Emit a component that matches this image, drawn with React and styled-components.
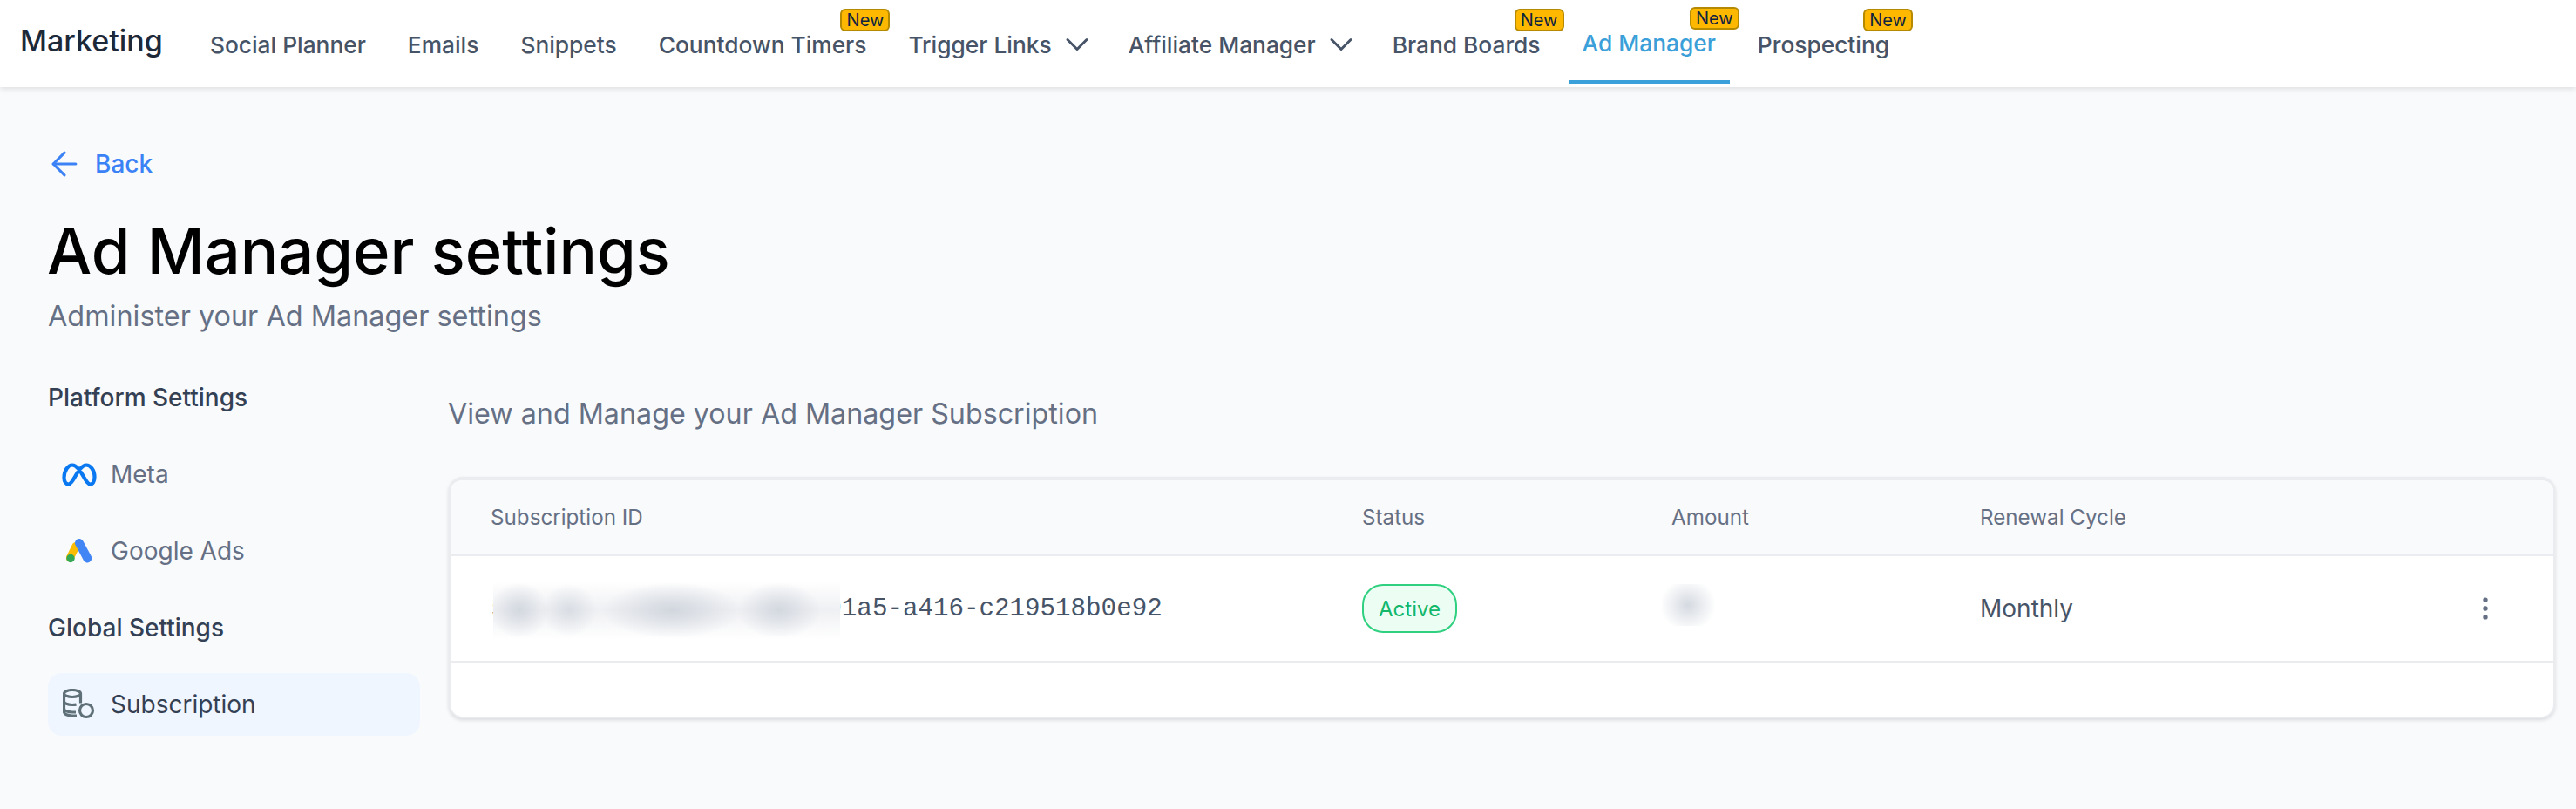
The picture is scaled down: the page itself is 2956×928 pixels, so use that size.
import React from 'react'
import styled, { createGlobalStyle } from 'styled-components'
import { ArrowLeft, ChevronDown, MoreVertical } from 'lucide-react'

const GlobalStyle = createGlobalStyle`
    html, body {
        margin: 0;
        padding: 0;
        background: #f9fafb;
        font-family: Inter, "Noto Sans", sans-serif;
    }
    * { box-sizing: border-box; }
`

const navItems = [
    { label: 'Social Planner' },
    { label: 'Emails' },
    { label: 'Snippets' },
    { label: 'Countdown Timers', badge: true },
    { label: 'Trigger Links', caret: true },
    { label: 'Affiliate Manager', caret: true },
    { label: 'Brand Boards', badge: true },
    { label: 'Ad Manager', badge: true, active: true },
    { label: 'Prospecting', badge: true },
]

const MetaIcon = () => (
    <svg width="40" height="27" viewBox="0 0 40 27" fill="none">
        <path
            d="M2.500 17C2.500 9 7 2.500 12 2.500c5 0 9 6.500 13 13.500 3 5 5 8.500 7.500 8.500 3 0 5-3.500 5-8.500 0-7.500-4.500-13.500-9.500-13.500-5 0-9 6.500-13 13.500-3 5-5 8.500-7.500 8.500C4.500 24.500 2.500 21.500 2.500 17z"
            stroke="#0a78f0"
            strokeWidth="4.200"
            strokeLinejoin="round"
        />
    </svg>
)

const GoogleAdsIcon = () => (
    <svg width="30" height="28" viewBox="0 0 30 28">
        <path d="M11 8.400 L4.300 22" stroke="#fbbc04" strokeWidth="9" strokeLinecap="round" />
        <path d="M15 5 L24.300 22.400" stroke="#4285f4" strokeWidth="10" strokeLinecap="round" />
        <circle cx="5" cy="22.500" r="4.700" fill="#34a853" />
    </svg>
)

const SubscriptionIcon = () => (
    <svg width="38" height="36" viewBox="0 0 38 36" fill="none" stroke="#5f7078" strokeWidth="3.2">
        <ellipse cx="11" cy="5.500" rx="9.500" ry="4" />
        <path d="M1.500 5.500v21c0 2.500 4 4.500 9.500 4.500h5" />
        <path d="M20.500 5.500v11" />
        <path d="M1.500 14.500c0 2.200 4 4 9.500 4 1.500 0 3-.1 4.500-.4" />
        <path d="M1.500 23c0 2.200 4 4 9.500 4h4" />
        <circle cx="27" cy="25" r="7.500" />
    </svg>
)

const App = () => {
    return (
        <Page>
            <GlobalStyle />
            <Header>
                <Brand>Marketing</Brand>
                <Nav>
                    {navItems.map((item) => (
                        <NavItem key={item.label} $active={item.active}>
                            {item.label}
                            {item.caret && <Caret size={44} strokeWidth={1.6} />}
                            {item.badge && <NewBadge $active={item.active}>New</NewBadge>}
                        </NavItem>
                    ))}
                </Nav>
            </Header>

            <Main>
                <BackLink>
                    <BackArrow size={44} strokeWidth={1.7} />
                    Back
                </BackLink>
                <Title>Ad Manager settings</Title>
                <Subtitle>Administer your Ad Manager settings</Subtitle>

                <Columns>
                    <Sidebar>
                        <SideHeading>Platform Settings</SideHeading>
                        <SideItem>
                            <IconSlot><MetaIcon /></IconSlot>
                            Meta
                        </SideItem>
                        <SideItem>
                            <IconSlot><GoogleAdsIcon /></IconSlot>
                            Google Ads
                        </SideItem>
                        <SideHeading>Global Settings</SideHeading>
                        <SideItem $selected>
                            <IconSlot><SubscriptionIcon /></IconSlot>
                            Subscription
                        </SideItem>
                    </Sidebar>

                    <Content>
                        <SectionTitle>View and Manage your Ad Manager Subscription</SectionTitle>
                        <Card>
                            <HeadRow>
                                <span>Subscription ID</span>
                                <span>Status</span>
                                <span>Amount</span>
                                <span>Renewal Cycle</span>
                            </HeadRow>
                            <BodyRow>
                                <IdCell>
                                    sub_0000_00000-0000-0001a5-a416-c219518b0e92
                                    <IdBlur />
                                </IdCell>
                                <div><StatusPill>Active</StatusPill></div>
                                <AmountCell>
                                    $0
                                    <AmountBlur />
                                </AmountCell>
                                <Cycle>Monthly</Cycle>
                                <MenuButton><MoreVertical size={34} strokeWidth={1.8} /></MenuButton>
                            </BodyRow>
                            <CardFoot />
                        </Card>
                    </Content>
                </Columns>
            </Main>
        </Page>
    )
}

export default App

const Page = styled.div`
    width: 2956px;
    height: 928px;
    overflow: hidden;
    background: #f9fafb;
`

const Header = styled.header`
    height: 100px;
    display: flex;
    align-items: stretch;
    padding-left: 23px;
    background: #fff;
    box-shadow: 0 2px 6px rgba(16, 24, 40, 0.12);
`

const Brand = styled.div`
    font-size: 34px;
    font-weight: 500;
    color: #1d2939;
    line-height: 94px;
    margin-right: 38px;
`

const Nav = styled.nav`
    display: flex;
    gap: 16px;
`

const NavItem = styled.div`
    position: relative;
    display: flex;
    align-items: center;
    height: 96px;
    padding: ${(p) => (p.$active ? '6px 16px 0' : '10px 16px 0')};
    font-size: 26.3px;
    font-weight: 500;
    white-space: nowrap;
    color: ${(p) => (p.$active ? '#3b9fd9' : '#475467')};
    border-bottom: 4px solid ${(p) => (p.$active ? '#3b9fd9' : 'transparent')};
`

const Caret = styled(ChevronDown)`
    margin: -8px -11px -8px 7px;
`

const NewBadge = styled.span`
    position: absolute;
    top: ${(p) => (p.$active ? '8px' : '10px')};
    right: -11px;
    width: 57px;
    height: 26px;
    display: flex;
    align-items: center;
    justify-content: center;
    border: 2px solid #b58a00;
    border-radius: 6px;
    background: #ffb800;
    color: #10243f;
    font-size: 20px;
    font-weight: 400;
`

const Main = styled.main`
    padding: 68px 24px 0 55px;
`

const BackLink = styled.a`
    display: flex;
    align-items: center;
    gap: 5px;
    height: 40px;
    font-size: 28px;
    line-height: 40px;
    font-weight: 500;
    color: #3b82f6;
`

const BackArrow = styled(ArrowLeft)`
    margin: -2px 8px -2px -3px;
`

const Title = styled.h1`
    margin: 36px 0 0 -1px;
    font-size: 72.3px;
    line-height: 88px;
    font-weight: 500;
    color: #000;
`

const Subtitle = styled.p`
    margin: 9px 0 0;
    font-size: 32.4px;
    line-height: 44px;
    color: #667085;
`

const Columns = styled.div`
    display: flex;
    gap: 33px;
    margin-top: 51px;
`

const Sidebar = styled.aside`
    width: 427px;
    flex-shrink: 0;
`

const SideHeading = styled.h3`
    margin: 0 0 32px;
    font-size: 28px;
    line-height: 40px;
    font-weight: 500;
    color: #344054;

    &:not(:first-child) {
        margin-top: 32px;
    }
`

const SideItem = styled.div`
    display: flex;
    align-items: center;
    height: 72px;
    margin-bottom: 16px;
    padding-left: 16px;
    border-radius: 16px;
    font-size: 28px;
    font-weight: 400;
    color: ${(p) => (p.$selected ? '#344054' : '#667085')};
    background: ${(p) => (p.$selected ? '#eff6ff' : 'transparent')};
`

const IconSlot = styled.span`
    width: 40px;
    margin-right: 16px;
    display: flex;
    justify-content: center;
`

const Content = styled.section`
    flex: 1;
    min-width: 0;
`

const SectionTitle = styled.h2`
    margin: 17px 0 50px -1px;
    font-size: 32.25px;
    line-height: 44px;
    font-weight: 400;
    color: #667085;
`

const Card = styled.div`
    border-radius: 16px;
    overflow: hidden;
    background: #fff;
    border: 2px solid #eaecf0;
    border-top-width: 4px;
    box-shadow: 0 2px 4px rgba(16, 24, 40, 0.14);
`

const tableColumns = '1000px 355px 354px 1fr 60px'

const HeadRow = styled.div`
    display: grid;
    grid-template-columns: ${tableColumns};
    align-items: center;
    height: 87px;
    padding: 0 46px;
    background: #f9fafb;
    border-bottom: 2px solid #eaecf0;
    font-size: 24.2px;
    color: #667085;
`

const BodyRow = styled.div`
    display: grid;
    grid-template-columns: ${tableColumns};
    align-items: center;
    height: 122px;
    padding: 0 46px;
    border-bottom: 2px solid #eaecf0;
`

const IdCell = styled.div`
    position: relative;
    font-family: "Liberation Mono", monospace;
    font-size: 29.2px;
    color: #475467;
    white-space: nowrap;
`

const IdBlur = styled.div`
    position: absolute;
    left: 3px;
    top: -15px;
    width: 398px;
    height: 66px;
    background:
        radial-gradient(ellipse 34px 32px at 30px 33px, rgba(208, 213, 221, 0.9), transparent),
        radial-gradient(ellipse 32px 30px at 87px 33px, rgba(208, 213, 221, 0.7), transparent),
        radial-gradient(ellipse 80px 32px at 205px 33px, rgba(208, 213, 221, 0.95), transparent),
        radial-gradient(ellipse 48px 32px at 328px 33px, rgba(208, 213, 221, 0.9), transparent),
        linear-gradient(to bottom, #fff, #eff0f3 50%, #fff);
`

const StatusPill = styled.span`
    display: inline-flex;
    align-items: center;
    justify-content: center;
    width: 109px;
    height: 56px;
    border: 2px solid #2fd07f;
    border-radius: 24px;
    background: #ecfdf3;
    color: #12b76a;
    font-size: 24px;
    font-weight: 400;
`

const AmountCell = styled.div`
    position: relative;
    font-size: 28px;
    color: #475467;
`

const AmountBlur = styled.div`
    position: absolute;
    left: -11px;
    top: -11px;
    width: 66px;
    height: 48px;
    background: radial-gradient(ellipse 32px 30px at 30px 24px, rgba(208, 213, 221, 0.9), transparent), #fff;
`

const Cycle = styled.div`
    font-size: 28px;
    font-weight: 400;
    color: #475467;
`

const MenuButton = styled.div`
    display: flex;
    justify-content: center;
    margin-right: 4px;
    color: #667085;
`

const CardFoot = styled.div`
    height: 62px;
`
